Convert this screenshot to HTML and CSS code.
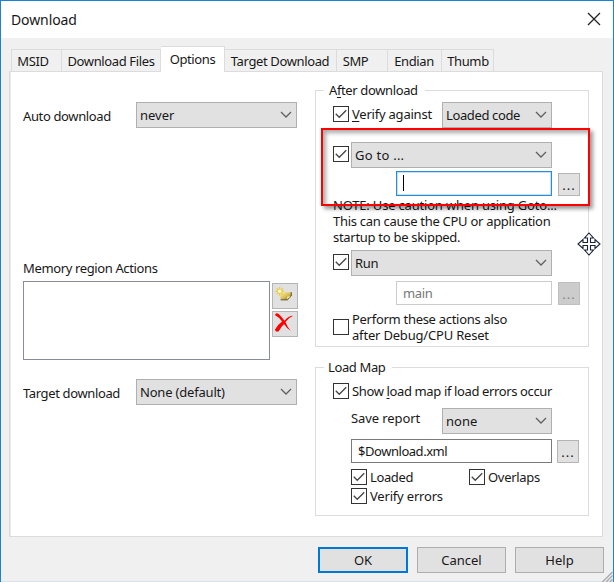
FILE: index.html
```html
<!DOCTYPE html>
<html lang="en">
<head>
<meta charset="utf-8">
<title>Download</title>
<link rel="stylesheet" href="styles.css">
</head>
<body>
<svg class="symbols" aria-hidden="true">
  <symbol id="chevron" viewBox="0 0 12 8"><path d="M1 1l5 5 5-5" fill="none" stroke="#606060" stroke-width="1.3"/></symbol>
  <symbol id="check" viewBox="0 0 16 16"><path d="M2 7.800l4 4L14 3.800" fill="none" stroke="#444" stroke-width="1.5"/></symbol>
</svg>
<main class="window">
  <header class="titlebar">
    <h1>Download</h1>
    <svg class="close" viewBox="0 0 14 14"><path d="M1 1l12 12M13 1L1 13" stroke="#222" stroke-width="1.25"/></svg>
  </header>
  <nav class="tabs">
    <span class="tab t-msid">MSID</span><span class="tab t-files">Download Files</span><span class="tab t-options active">Options</span><span class="tab t-target">Target Download</span><span class="tab t-smp">SMP</span><span class="tab t-endian">Endian</span><span class="tab t-thumb">Thumb</span>
  </nav>
  <section class="panel">
    <div class="left">
      <div class="row field"><span class="label">Auto download</span><div class="select wide"><span class="s0">never</span><svg><use href="#chevron"/></svg></div></div>
      <p class="memory-label">Memory region Actions</p>
      <div class="memory">
        <div class="listbox"></div>
        <div class="tools">
          <div class="tool">
            <svg viewBox="0 0 25 25">
              <defs><linearGradient id="gold" x1="0" y1="0" x2="1" y2="1"><stop offset="0" stop-color="#fff4a0"/><stop offset=".55" stop-color="#d9bd55"/><stop offset="1" stop-color="#745e20"/></linearGradient></defs>
              <path d="M7 8.500h12v4l-4 4H8z" fill="url(#gold)"/>
              <path d="M8 16.500h7l4-4v-4" fill="none" stroke="#5a4c20" stroke-width="1"/>
              <path d="M14.500 16l.5-3h3.500z" fill="#f8eb95"/>
              <path d="M7 3v9M2.500 7.500h9M4 4.500l6 6M10 4.500l-6 6" stroke="#edc62d" stroke-width="1.200"/>
              <circle cx="7" cy="7.500" r="1.800" fill="#fffbd0"/>
            </svg>
          </div>
          <div class="tool">
            <svg viewBox="0 0 25 25"><path d="M2 3Q3 0 6 2Q9 5 12 9Q16 4 21 4Q16 6 13 10.500Q15 16 18.500 19.500Q14 17 11.500 12.500Q8 16 6 20Q3 21.500 2 18.500Q5 13 9.500 10Q6 5 2 3Z" fill="#f00"/></svg>
          </div>
        </div>
      </div>
      <div class="row field target"><span class="label">Target download</span><div class="select wide"><span class="s2">None (default)</span><svg><use href="#chevron"/></svg></div></div>
    </div>
    <div class="right">
      <section class="group after">
        <h2 class="legend">A<u>f</u>ter download</h2>
        <div class="row verify"><i class="box"><svg><use href="#check"/></svg></i><span class="text w-verify"><u>V</u>erify against</span><div class="select small"><span>Loaded code</span><svg><use href="#chevron"/></svg></div></div>
        <div class="row goto"><i class="box"><svg><use href="#check"/></svg></i><div class="select long"><span class="s-goto">Go to ...</span><svg><use href="#chevron"/></svg></div></div>
        <div class="row goto-input"><div class="input focus"><b class="caret"></b></div><div class="browse">...</div></div>
        <div class="note"><p class="s2">NOTE: Use caution when using Goto...</p><p class="s3">This can cause the CPU or application</p><p class="s3">startup to be skipped.</p></div>
        <div class="row run"><i class="box"><svg><use href="#check"/></svg></i><div class="select long"><span>Run</span><svg><use href="#chevron"/></svg></div></div>
        <div class="row run-input"><div class="input disabled">main</div><div class="browse disabled">...</div></div>
        <div class="row perform"><i class="box"></i><div class="lines"><p class="s3">Perform these actions also</p><p class="s2">after Debug/CPU Reset</p></div></div>
        <div class="highlight"></div>
      </section>
      <section class="group map">
        <h2 class="legend map-legend">Load Map</h2>
        <div class="row show"><i class="box"><svg><use href="#check"/></svg></i><span class="text">Show <u>l</u>oad map if load errors occur</span></div>
        <div class="row report"><span class="text w-save">Save report</span><div class="select small"><span class="s0">none</span><svg><use href="#chevron"/></svg></div></div>
        <div class="row file"><div class="input path">$Download.xml</div><div class="browse">...</div></div>
        <div class="row checks"><i class="box"><svg><use href="#check"/></svg></i><span class="text w-loaded">Loaded</span><i class="box"><svg><use href="#check"/></svg></i><span class="text s3">Overlaps</span></div>
        <div class="row errors"><i class="box"><svg><use href="#check"/></svg></i><span class="text s2">Verify errors</span></div>
      </section>
    </div>
  </section>
  <footer class="actions"><div class="button primary">OK</div><div class="button">Cancel</div><div class="button">Help</div></footer>
  <svg class="grip" viewBox="0 0 12 12"><path d="M1 12L12 1M5 12l7-7M9 12l3-3" stroke="#aaa" stroke-width="1.500"/></svg>
  <svg class="cursor" viewBox="0 0 24 24"><path d="M12 1l4.500 5h-3v4.500H18v-3L23 12l-5 4.500v-3h-4.500V18h3L12 23l-4.500-5h3v-4.500H6v3L1 12l5-4.500v3h4.500V6h-3z" fill="#fff" stroke="#182238" stroke-width="1.100"/></svg>
</main>
</body>
</html>
```
FILE: styles.css
```css
* { box-sizing: border-box; }
body { margin: 0; font: 13px/16px "Noto Sans", sans-serif; letter-spacing: -.37px; color: #181818; }
h1, h2, p { margin: 0; font-weight: 400; }
u { text-decoration-thickness: 1px; text-underline-offset: 2px; }
.s0 { letter-spacing: 0; }
.s2 { letter-spacing: -.19px; }
.s3 { letter-spacing: -.29px; }
.s-goto { letter-spacing: .25px; }
.symbols { position: absolute; width: 0; height: 0; }
.window { position: relative; width: 614px; height: 582px; overflow: hidden; background: #f0f0f0; border: solid #1883d7; border-width: 1px 1px 0; box-shadow: inset 0 -1px #d7e2ea; }
.titlebar { height: 37px; padding: 0 12px 0 10px; display: flex; align-items: center; justify-content: space-between; background: #fff; }
.titlebar h1 { font-size: 14px; line-height: 20px; letter-spacing: -.1px; }
.close { width: 14px; height: 14px; margin-top: -2px; }
.tabs { height: 33px; margin-left: 10px; display: flex; align-items: flex-end; white-space: nowrap; }
.tab { height: 22px; padding-top: 3px; text-align: center; border: 1px solid #dcdcdc; border-width: 1px 1px 0 0; }
.t-msid { width: 51px; border-left-width: 1px; padding-right: 7px; }
.t-files { width: 99px; }
.t-options { width: 64px; }
.t-target { width: 112px; padding-right: 1px; }
.t-smp { width: 51px; padding-right: 13px; }
.t-endian { width: 54px; padding-right: 1px; }
.t-thumb { width: 52px; padding-left: 1px; }
.tab.active { height: 26px; margin-bottom: -1px; background: #fff; position: relative; padding-top: 4px; }
.panel { width: 594px; height: 466px; margin-left: 8px; background: #fff; border: 1px solid #dcdcdc; box-shadow: inset 1px 0 #e8e8e8; display: flex; white-space: nowrap; }
.left { width: 305px; padding: 30px 0 0 13px; }
.row { display: flex; }
.label { width: 113px; padding-top: 6px; }
.select { height: 26px; display: flex; align-items: center; justify-content: space-between; padding: 0 4px 0 3px; background: #e1e1e1; border: 1px solid #b0b0b0; }
.select svg { width: 12px; height: 8px; }
.wide { width: 161px; }
.long { width: 201px; margin-left: 2px; }
.small { width: 110px; }
.memory-label { margin-top: 132px; }
.memory { display: flex; margin-top: 5px; }
.listbox { width: 247px; height: 79px; border: 1px solid #8a8d99; }
.tools { margin: 2px 0 0 2px; display: grid; gap: 2px; align-content: start; }
.tool { width: 26px; height: 26px; background: #e1e1e1; border: 1px solid #b5b5b5; }
.tool svg { display: block; width: 24px; height: 24px; }
.target { margin-top: 19px; }
.right { width: 274px; padding-top: 18px; }
.group { position: relative; border: 1px solid #dcdcdc; padding-left: 17px; }
.after { height: 257px; }
.map { height: 149px; margin-top: 20px; }
.legend { width: max-content; height: 16px; margin: -9px 0 0 -9px; padding: 0 7px 0 5px; background: #fff; font-size: 13px; line-height: 17px; }
.map-legend { padding-left: 4px; }
.box { flex: none; width: 16px; height: 16px; border: 1px solid #333; background: #fff; }
.box svg { display: block; width: 14px; height: 14px; }
.text { padding-left: 3px; }
.verify { margin-top: 4px; }
.verify .box, .goto .box, .run .box { margin-top: 4px; }
.w-verify { width: 93px; padding-top: 4px; letter-spacing: -.22px; }
.goto { margin-top: 14px; }
.goto-input, .run-input { margin: 3px 0 0 63px; }
.input { width: 156px; height: 25px; padding: 3px 6px; border: 1px solid #7a7a7a; background: #fff; }
.input.focus { border-color: #2a8ddb; box-shadow: inset 0 0 0 .5px #8fc4ee; }
.input.disabled { height: 24px; border-color: #ccc; color: #777; }
.caret { display: block; width: 1px; height: 16px; background: #000; }
.browse { width: 22px; height: 23px; margin: 2px 0 0 6px; text-align: center; border: 1px solid #b5b5b5; background: #e1e1e1; letter-spacing: 1px; line-height: 22px; }
.run-input { margin-top: 5px; }
.run-input .browse { margin-top: 1px; background: #ccc; border-color: #bfbfbf; color: #858585; }
.note { margin-top: 1px; }
.run { margin-top: 5px; }
.perform { margin-top: 6px; }
.perform .box { margin-top: 8px; }
.lines { padding-left: 3px; }
.highlight { position: absolute; left: 5px; top: 37px; width: 269px; height: 78px; border: 2px solid #f00; box-shadow: 3px 3px 4px #0006, inset 3px 3px 4px #0005; }
.show { margin-top: 8px; }
.report { margin: 9px 0 0 18px; }
.w-save { width: 91px; padding: 2px 0 0; letter-spacing: -.1px; }
.file { margin: 5px 0 0 18px; }
.path { width: 201px; height: 24px; letter-spacing: -.46px; }
.file .browse { margin: 1px 0 0 5px; }
.checks, .errors { margin: 6px 0 0 18px; }
.w-loaded { width: 102px; }
.errors { margin-top: 3px; }
.actions { display: flex; gap: 9px; margin: 10px 0 0 317px; letter-spacing: 0; }
.button { width: 89px; height: 26px; border: 1px solid #adadad; background: #e1e1e1; text-align: center; line-height: 24px; }
.button.primary { border: 2px solid #0078d7; line-height: 22px; width: 90px; }
.grip { position: absolute; right: 0; bottom: 0; width: 12px; height: 11px; }
.cursor { position: absolute; left: 576px; top: 231px; width: 24px; height: 24px; }
```
